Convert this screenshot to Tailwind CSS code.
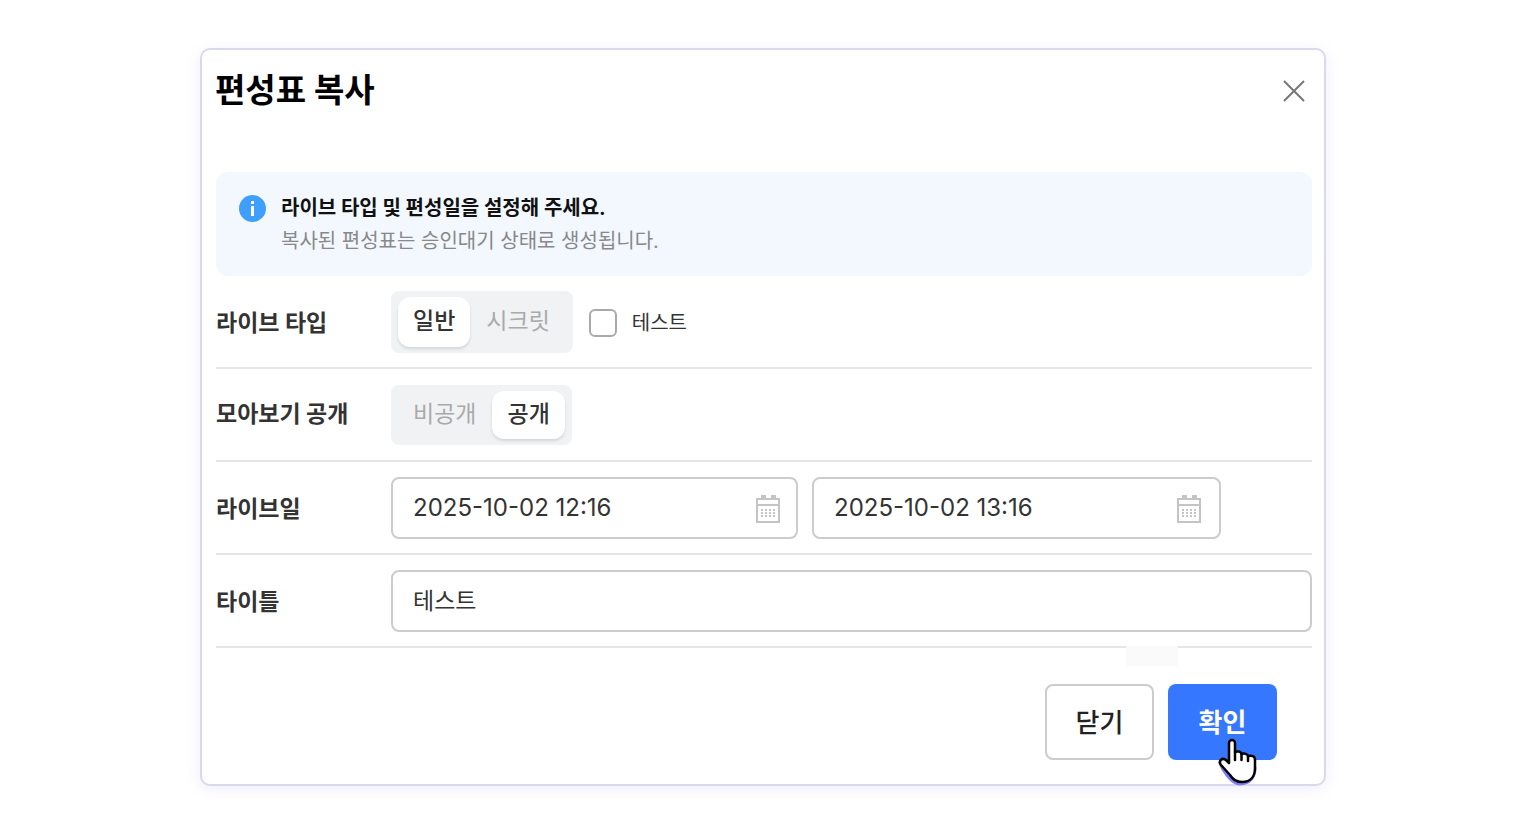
<!DOCTYPE html>
<html lang="ko">
<head>
    <meta charset="UTF-8">
    <meta name="viewport" content="width=device-width, initial-scale=1.0">
    <title>편성표 복사</title>
    <script src="https://cdn.jsdelivr.net/npm/@tailwindcss/browser@4"></script>
</head>
<body class="bg-white pt-12 pb-12 pl-[200px] pr-[194px] font-['Inter','Noto_Sans_CJK_KR',sans-serif] text-[#333]">
    <!-- Dialog -->
    <main role="dialog" aria-labelledby="dialog-title" class="bg-white border-2 border-[#d9d9ee] rounded-[10px] pl-[13px] pr-3 shadow-[0_3px_14px_rgba(120,110,230,0.12)]">
        <!-- Header -->
        <header class="flex items-center justify-between h-20 pr-[2px]">
            <h1 id="dialog-title" class="text-[33px] leading-10 font-bold text-black">편성표 복사</h1>
            <button type="button" aria-label="닫기" class="p-1">
                <svg class="w-6 h-6" viewBox="0 0 24 24" fill="none" stroke="#777" stroke-width="2">
                    <path d="M2 3l20 20M22 3L2 23"/>
                </svg>
            </button>
        </header>

        <!-- Notice -->
        <section class="mt-[42px] ml-px flex gap-[15px] bg-[#f3f8ff] rounded-xl px-[23px] pt-5 pb-[18px]">
            <svg class="w-[27px] h-[27px] mt-[3px]" viewBox="0 0 27 27">
                <circle cx="13.5" cy="13.5" r="13.5" fill="#3e9ffc"/>
                <path d="M12 6h3v3h-3zM12 11h3v10h-3z" fill="#fff"/>
            </svg>
            <div class="text-[20px] leading-[33px]">
                <p class="font-bold text-[#111]">라이브 타입 및 편성일을 설정해 주세요.</p>
                <p class="text-[#888]">복사된 편성표는 승인대기 상태로 생성됩니다.</p>
            </div>
        </section>

        <!-- Form -->
        <form>
            <div class="flex items-center h-[93px] ml-px border-b-2 border-[#e5e5e5]">
                <span class="w-[175px] shrink-0 pt-1 text-[23px] font-bold">라이브 타입</span>
                <div class="flex bg-[#f1f2f4] rounded-lg px-[7px] py-[6px] text-[23px]">
                    <button type="button" class="h-[50px] px-[15px] bg-white rounded-xl shadow-[0_2px_3px_rgba(0,0,0,0.12)] font-medium">일반</button>
                    <button type="button" class="h-[50px] px-4 text-[#aaa]">시크릿</button>
                </div>
                <label class="flex items-center gap-[15px] ml-4 pt-[2px] text-[20px]">
                    <input type="checkbox" class="appearance-none w-7 h-7 border-2 border-[#aaa] rounded-md bg-white">
                    테스트
                </label>
            </div>
            <div class="flex items-center h-[93px] ml-px border-b-2 border-[#e5e5e5]">
                <span class="w-[175px] shrink-0 text-[23px] font-bold">모아보기 공개</span>
                <div class="flex bg-[#f1f2f4] rounded-lg px-[7px] py-[6px] text-[23px]">
                    <button type="button" class="h-12 pl-[15px] pr-4 text-[#aaa]">비공개</button>
                    <button type="button" class="h-12 px-[15px] bg-white rounded-xl shadow-[0_2px_3px_rgba(0,0,0,0.12)] font-medium">공개</button>
                </div>
            </div>
            <div class="flex items-center h-[93px] ml-px border-b-2 border-[#e5e5e5]">
                <label for="live-start" class="w-[175px] shrink-0 pt-1 text-[23px] font-bold">라이브일</label>
                <div class="flex flex-1 min-w-0 gap-[14px] pr-[91px]">
                    <div class="flex flex-1 min-w-0 items-center h-[62px] border-2 border-[#ccc] rounded-lg pl-5 pr-4">
                        <input id="live-start" type="text" value="2025-10-02 12:16" class="flex-1 min-w-0 text-[24px] outline-none">
                        <button type="button" aria-label="시작일 선택">
                            <svg class="w-6 h-[30px]" viewBox="0 0 24 30" fill="none" stroke="#c4c4c4" stroke-width="2">
                                <path d="M1 6h22v23H1zM1 12h22"/>
                                <path d="M5 4h5M15 4h5" stroke-width="4"/>
                                <path d="M6 16v9M10 16v9M14 16v9M18 16v9" stroke-dasharray="2 1"/>
                            </svg>
                        </button>
                    </div>
                    <div class="flex flex-1 min-w-0 items-center h-[62px] border-2 border-[#ccc] rounded-lg pl-5 pr-[18px]">
                        <input id="live-end" type="text" value="2025-10-02 13:16" aria-label="라이브 종료일" class="flex-1 min-w-0 text-[24px] outline-none">
                        <button type="button" aria-label="종료일 선택">
                            <svg class="w-6 h-[30px]" viewBox="0 0 24 30" fill="none" stroke="#c4c4c4" stroke-width="2">
                                <path d="M1 6h22v23H1zM1 12h22"/>
                                <path d="M5 4h5M15 4h5" stroke-width="4"/>
                                <path d="M6 16v9M10 16v9M14 16v9M18 16v9" stroke-dasharray="2 1"/>
                            </svg>
                        </button>
                    </div>
                </div>
            </div>
            <div class="flex items-center h-[93px] ml-px border-b-2 border-[#e5e5e5]">
                <label for="live-title" class="w-[175px] shrink-0 pt-1 text-[23px] font-bold">타이틀</label>
                <input id="live-title" type="text" value="테스트" class="flex-1 min-w-0 h-[62px] border-2 border-[#ccc] rounded-lg px-5 pb-1 text-[23px]">
            </div>

            <!-- Actions -->
            <div class="relative flex justify-end gap-[14px] pt-9 pb-6 pr-[35px] text-[26px]">
                <div class="absolute -top-[2px] right-[134px] w-[52px] h-5 bg-[#fafafa]"></div>
                <button type="button" class="w-[109px] h-[76px] border-2 border-[#ccc] rounded-lg bg-white font-medium text-[#222]">닫기</button>
                <button type="submit" class="relative w-[109px] h-[76px] rounded-lg bg-[#3578ff] font-bold text-white">
                    확인
                    <!-- Hand pointer -->
                    <svg class="absolute left-[50px] top-[54px] w-[39px] h-12" viewBox="0 0 39 48" stroke-linejoin="round" stroke-linecap="round">
                        <path d="M2 25C4 31 13 46 22 46C32 46 37 39 37 30" fill="none" stroke="#7f7dff" stroke-width="3"/>
                        <path d="M11 23V5a3 3 0 0 1 6 0v9c2-1 6-1 6.500 2c3-1 6 0 6.500 2c4-1 7 0 7 4v8c0 9-5 14-13 14c-5 0-9-2-12-7L3 27c-3-4 1-8 5-5l3 3z" fill="#fff" stroke="#000" stroke-width="2.500"/>
                        <path d="M17 14v8M23.500 16v6M30 18v5" fill="none" stroke="#000" stroke-width="2.500"/>
                    </svg>
                </button>
            </div>
        </form>
    </main>
</body>
</html>
